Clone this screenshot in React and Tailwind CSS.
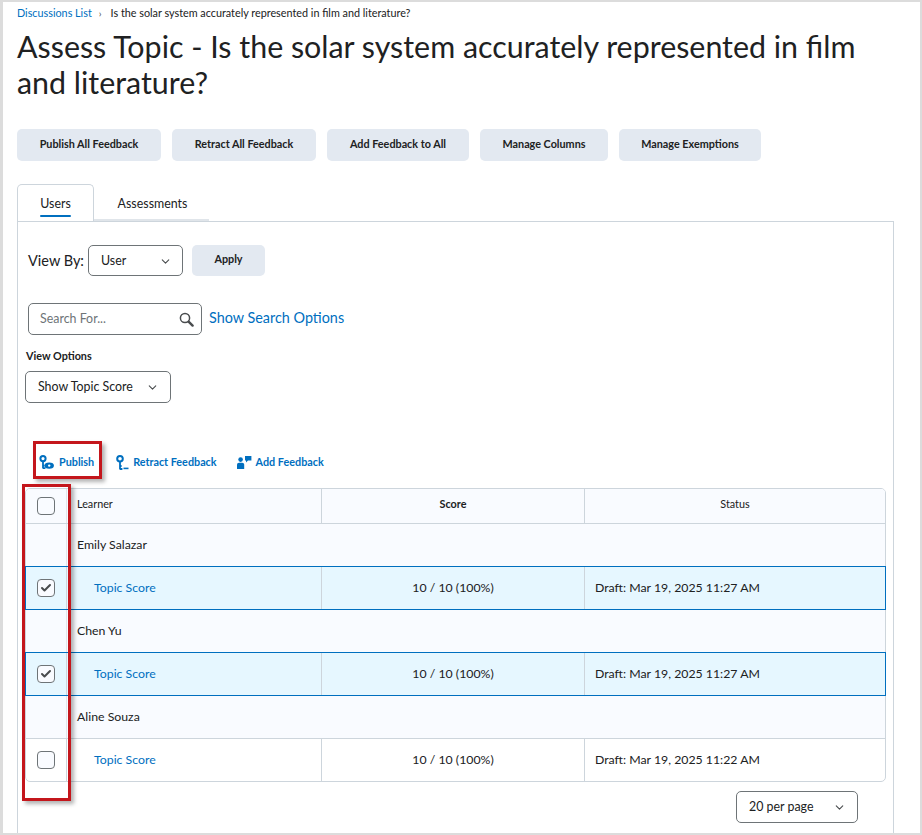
import React from 'react';
import { ChevronDown, Check } from 'lucide-react';

const topButtons = [
  { label: 'Publish All Feedback', width: 'w-[144px]' },
  { label: 'Retract All Feedback', width: 'w-[144px]' },
  { label: 'Add Feedback to All', width: 'w-[142px]' },
  { label: 'Manage Columns', width: 'w-[128px]' },
  { label: 'Manage Exemptions', width: 'w-[142px]' }
];

const learners = [
  { name: 'Emily Salazar', date: 'Draft: Mar 19, 2025 11:27 AM', selected: true },
  { name: 'Chen Yu', date: 'Draft: Mar 19, 2025 11:27 AM', selected: true },
  { name: 'Aline Souza', date: 'Draft: Mar 19, 2025 11:22 AM', selected: false }
];

const Box = ({ checked }) => (
  <span className="flex h-[18px] w-[18px] items-center justify-center rounded-[4px] border-[1.5px] border-[#6e7477] bg-[#f9fbff]">
    {checked && <Check className="h-[12px] w-[12px] text-[#494c4e]" strokeWidth={4} />}
  </span>
);

const Select = ({ label, className }) => (
  <div className={`flex items-center justify-between rounded-[5px] border border-[#6e7477] bg-white text-[12.4px] text-[#202122] ${className}`}>
    <span>{label}</span>
    <ChevronDown className="h-[13px] w-[13px] text-[#494c4e]" strokeWidth={2} />
  </div>
);

const SearchIcon = () => (
  <svg width="15" height="15" viewBox="0 0 15 15" fill="none" className="text-[#494c4e]">
    <circle cx="6" cy="6" r="4.6" stroke="currentColor" strokeWidth="1.5" />
    <path d="M9.6 9.6l4 4" stroke="currentColor" strokeWidth="2.4" strokeLinecap="round" />
  </svg>
);

const PublishIcon = () => (
  <svg width="15" height="15" viewBox="0 0 15 15" fill="none" className="text-[#006fbf]">
    <circle cx="4" cy="3.6" r="2.6" stroke="currentColor" strokeWidth="2" />
    <path d="M4 6v7.5M4 13.2h2.4M4 10.6h1.6" stroke="currentColor" strokeWidth="1.8" />
    <ellipse cx="10.2" cy="10.6" rx="4.7" ry="3.2" fill="currentColor" />
    <circle cx="10.2" cy="10.6" r="1.2" fill="white" />
  </svg>
);

const RetractIcon = () => (
  <svg width="15" height="15" viewBox="0 0 15 15" fill="none" className="text-[#006fbf]">
    <circle cx="5" cy="3.8" r="2.8" stroke="currentColor" strokeWidth="2" />
    <path d="M5 6.4v8M5 14h2.4M5 11h1.6" stroke="currentColor" strokeWidth="1.8" />
    <path d="M8.5 13.4h5" stroke="currentColor" strokeWidth="1.6" />
  </svg>
);

const AddFeedbackIcon = () => (
  <svg width="15" height="15" viewBox="0 0 15 15" className="text-[#006fbf]" fill="currentColor">
    <circle cx="3.6" cy="4.6" r="2.3" />
    <path d="M0 14v-4.2c0-1.2.9-2 2-2h3.2c1.1 0 2 .8 2 2V14z" />
    <path d="M8 1h6.4v4.6h-3.4L9 7.4V5.6H8z" />
  </svg>
);

const App = () => (
  <div className="h-[835px] w-[922px] overflow-hidden bg-[#dcdcdc] pb-[2px] pl-[3px] pr-[2px] pt-[2px] font-['Lato',sans-serif] text-[#202122]">
    <div className="relative h-full bg-white pl-[14px] pr-[26px]">
      <nav className="flex h-[22px] items-center text-[10.8px]">
        <span className="text-[#006fbf]">Discussions List</span>
        <span className="ml-[7px] mr-[9px] text-[10px] text-[#494c4e]">›</span>
        <span>Is the solar system accurately represented in film and literature?</span>
      </nav>
      <h1 className="mt-[4px] text-[30.4px] leading-[36px]">
        Assess Topic - Is the solar system accurately represented in film and literature?
      </h1>

      <div className="mt-[29px] flex gap-[11px]">
        {topButtons.map((b) => (
          <button key={b.label} className={`h-[32px] rounded-[5px] bg-[#e3e9f1] pb-[2px] text-[10.8px] font-bold text-[#202122] ${b.width}`}>
            {b.label}
          </button>
        ))}
      </div>

      <div className="mt-[23px] flex h-[37px] items-end">
        <div className="flex h-[37px] w-[77px] flex-col items-center rounded-t-[5px] border border-b-0 border-[#cdd5dc] bg-white pt-[10px] text-[12.4px] text-[#202122]">
          <span>Users</span>
          <span className="mt-[1px] h-[2px] w-[31px] rounded-[1px] bg-[#006fbf]" />
        </div>
        <div className="flex h-[37px] w-[115px] justify-center border-b-2 border-[#e0e5ea] pl-[2px] pt-[11px] text-[12.4px] text-[#202122]">
          Assessments
        </div>
      </div>

      <section className="h-[612px] border border-b-0 border-[#cdd5dc] pl-[7px] pr-[7px]">
        <div className="ml-[3px] mt-[23px] flex items-center">
          <span className="text-[14.5px]">View By:</span>
          <Select label="User" className="ml-[4px] h-[31px] w-[95px] pl-[12px] pr-[10px] pt-[2px]" />
          <button className="ml-[9px] h-[31px] w-[73px] rounded-[5px] bg-[#e3e9f1] pb-[2px] text-[10.8px] font-bold">Apply</button>
        </div>

        <div className="ml-[3px] mt-[27px] flex items-center">
          <div className="flex h-[32px] w-[174px] items-center justify-between rounded-[5px] border border-[#6e7477] pl-[11px] pr-[7px] text-[12.4px] text-[#6e7477]">
            <span>Search For...</span>
            <SearchIcon />
          </div>
          <span className="mb-[2px] ml-[7px] text-[14.4px] text-[#006fbf]">Show Search Options</span>
        </div>

        <div className="ml-[1px] mt-[14px] text-[10.8px] font-bold leading-[14px]">View Options</div>
        <Select label="Show Topic Score" className="mt-[8px] h-[32px] w-[146px] pl-[12px] pr-[11px]" />

        <div className="ml-[14px] mt-[49px] flex h-[20px] items-center text-[10.8px] font-bold text-[#006fbf]">
          <PublishIcon />
          <span className="ml-[5px]">Publish</span>
          <span className="ml-[21px]"><RetractIcon /></span>
          <span className="ml-[3px]">Retract Feedback</span>
          <span className="ml-[20px]"><AddFeedbackIcon /></span>
          <span className="ml-[4px]">Add Feedback</span>
        </div>

        <div className="mt-[16px] w-[861px] rounded-[5px] border border-[#cdd5dc]">
          <div className="grid h-[35px] grid-cols-[41px_255px_263px_1fr] rounded-t-[4px] border-b border-[#cdd5dc] bg-[#f9fbff] text-[10.8px]">
            <div className="flex items-center justify-center border-r border-[#e0e5ea]"><Box /></div>
            <div className="flex items-center border-r border-[#cdd5dc] pb-[3px] pl-[10px]">Learner</div>
            <div className="flex items-center justify-center border-r border-[#cdd5dc] pb-[3px] font-bold">Score</div>
            <div className="flex items-center justify-center pb-[3px]">Status</div>
          </div>
          {learners.map((l) => (
            <div key={l.name}>
              <div className="grid h-[42px] grid-cols-[41px_1fr] bg-[#f9fbff] text-[12.3px]">
                <div className="border-r border-[#e0e5ea]" />
                <div className="flex items-center pl-[10px]">{l.name}</div>
              </div>
              {l.selected ? (
                <div className="-mx-px grid h-[44px] grid-cols-[41px_255px_263px_1fr] border border-[#006fbf] bg-[#e6f7ff] text-[12.3px]">
                  <div className="flex items-center justify-center border-r border-[#cdd5dc]"><Box checked /></div>
                  <div className="flex items-center border-r border-[#cdd5dc] pl-[27px] text-[#006fbf]">Topic Score</div>
                  <div className="flex items-center justify-center border-r border-[#cdd5dc]">10 / 10 (100%)</div>
                  <div className="flex items-center pl-[10px]">{l.date}</div>
                </div>
              ) : (
                <div className="grid h-[43px] grid-cols-[41px_255px_263px_1fr] border-t border-[#cdd5dc] text-[12.3px]">
                  <div className="flex items-center justify-center border-r border-[#cdd5dc]"><Box /></div>
                  <div className="flex items-center border-r border-[#cdd5dc] pl-[27px] text-[#006fbf]">Topic Score</div>
                  <div className="flex items-center justify-center border-r border-[#cdd5dc]">10 / 10 (100%)</div>
                  <div className="flex items-center pl-[10px]">{l.date}</div>
                </div>
              )}
            </div>
          ))}
        </div>

        <div className="mt-[9px] flex w-[833px] justify-end">
          <Select label="20 per page" className="h-[32px] w-[122px] pl-[12px] pr-[11px]" />
        </div>
      </section>

      <div className="absolute left-[30px] top-[439px] h-[38px] w-[69px] border-[3px] border-[#c4161c] shadow-[3px_3px_4px_rgba(0,0,0,0.3)]" />
      <div className="absolute left-[19px] top-[482px] h-[317px] w-[49px] border-[3px] border-[#c4161c] shadow-[3px_3px_4px_rgba(0,0,0,0.3)]" />
    </div>
  </div>
);

export default App;
